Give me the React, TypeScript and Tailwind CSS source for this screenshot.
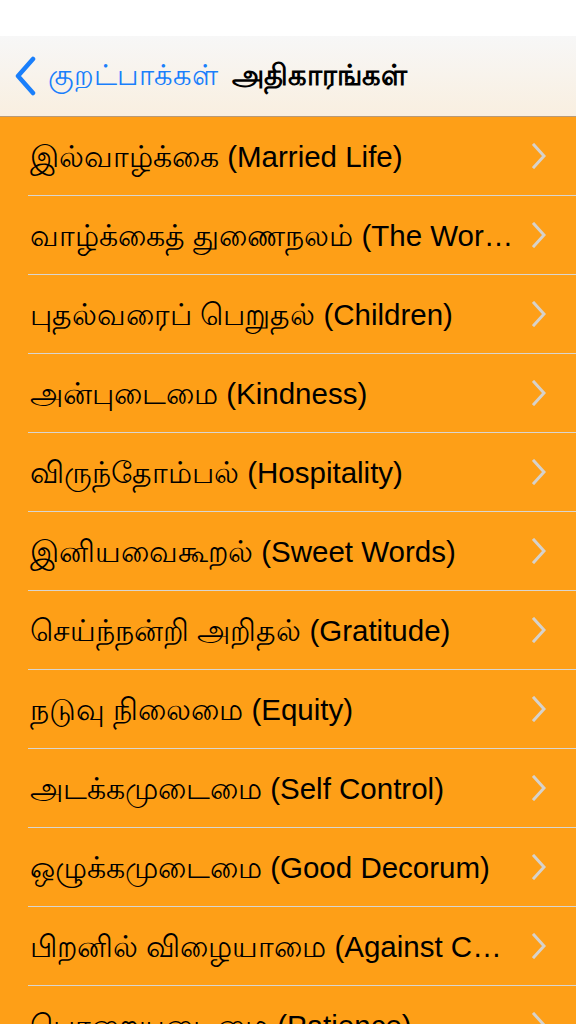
const chapters = [
    'இல்வாழ்க்கை (Married Life)',
    'வாழ்க்கைத் துணைநலம் (The Worth of a Wife)',
    'புதல்வரைப் பெறுதல் (Children)',
    'அன்புடைமை (Kindness)',
    'விருந்தோம்பல் (Hospitality)',
    'இனியவைகூறல் (Sweet Words)',
    'செய்ந்நன்றி அறிதல் (Gratitude)',
    'நடுவு நிலைமை (Equity)',
    'அடக்கமுடைமை (Self Control)',
    'ஒழுக்கமுடைமை (Good Decorum)',
    'பிறனில் விழையாமை (Against Coveting Another\'s Wife)',
    'பொறையுடைமை (Patience)',
];

function Disclosure() {
    return (
        <svg width="14" height="26" viewBox="0 0 14 26" className="shrink-0">
            <path d="M2 2 L12 13 L2 24" fill="none" stroke="#d6d2cc" strokeWidth="3" strokeLinecap="square" />
        </svg>
    );
}

export default function App() {
    return (
        <div className="h-[1024px] w-[576px] overflow-hidden bg-[#fe9f17] font-['Liberation_Sans',sans-serif]">
            {/* status bar */}
            <div className="h-9 bg-white" />

            {/* nav bar */}
            <div className="h-[81px] flex items-center bg-gradient-to-b from-[#f7f7f7] to-[#f9efe0] border-b border-[#b89a78]">
                <svg width="24" height="40" viewBox="0 0 24 40" className="ml-[13px] mr-[11px]">
                    <path d="M20 3 L5 20 L20 37" fill="none" stroke="#1a7ffb" strokeWidth="4.5" strokeLinecap="round" strokeLinejoin="round" />
                </svg>
                <span className="text-[29px] text-[#1a7ffb]">குறட்பாக்கள்</span>
                <span className="ml-[14px] text-[29px] font-bold text-black">அதிகாரங்கள்</span>
            </div>

            {/* list */}
            <div className="pl-[28px]">
                {chapters.map((c) => (
                    <div key={c} className="h-[79px] flex items-center border-b border-[#d9d6d0] pr-[30px]">
                        <p className="flex-1 min-w-0 truncate text-[29.5px] text-black pl-[2px] pr-[14px] pt-[3px]">{c}</p>
                        <Disclosure />
                    </div>
                ))}
            </div>
        </div>
    );
}
